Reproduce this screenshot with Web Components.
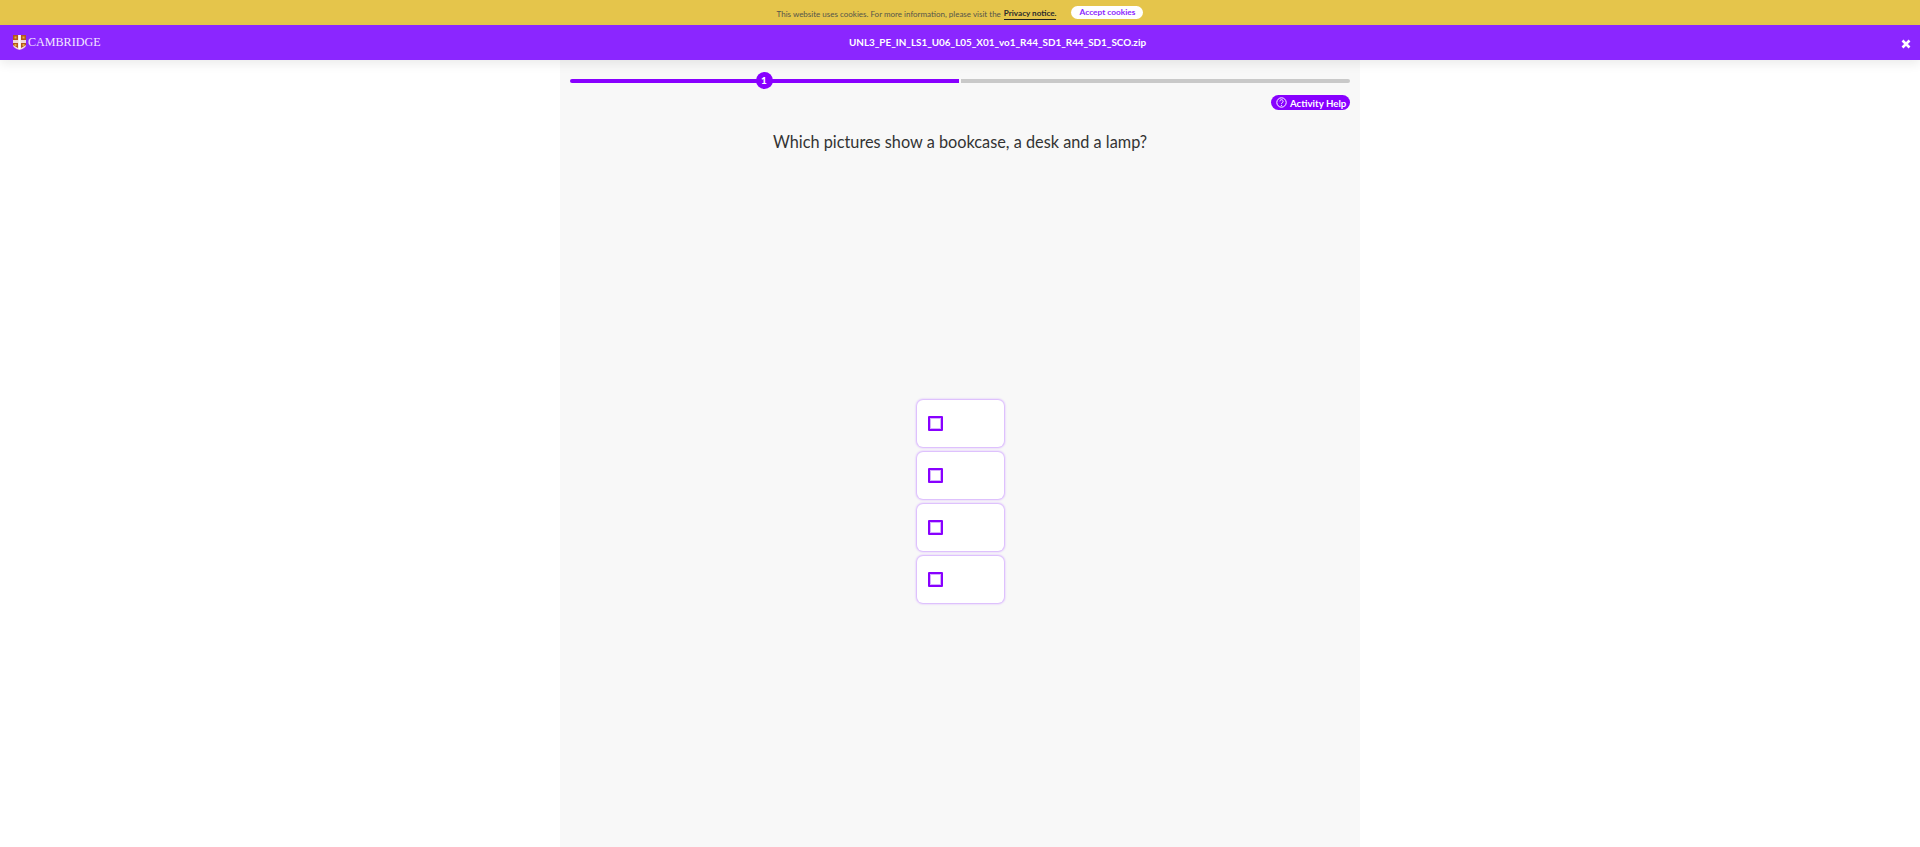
<!DOCTYPE html>
<html lang="en"><head><meta charset="utf-8"><title>Activity</title>
<style>
html,body{margin:0;padding:0;height:847px;overflow:hidden;background:#fff;font-family:Lato,"Noto Sans",sans-serif;}
body{display:flex;flex-direction:column;}
</style></head><body>
<cookie-bar></cookie-bar>
<top-bar></top-bar>
<activity-panel>
  <progress-track slot="progress"></progress-track>
  <help-pill slot="help"></help-pill>
  <span slot="question">Which pictures show a bookcase, a desk and a lamp?</span>
  <option-card></option-card><option-card></option-card><option-card></option-card><option-card></option-card>
</activity-panel>
<script>
function def(name,html){customElements.define(name,class extends HTMLElement{constructor(){super();this.attachShadow({mode:'open'}).innerHTML=html;}});}
def('cookie-bar',`<style>
:host{display:flex;flex:none;height:25px;background:#e5c54b;align-items:center;justify-content:center;font-size:8px;color:#55554a;box-sizing:border-box}
a{color:#2a2a2a;font-weight:700;font-size:8.1px;text-decoration:none;border-bottom:1px solid #222;margin-left:3px;line-height:11px;margin-top:3px}
button{all:unset;margin-left:15px;width:72px;height:13px;line-height:13px;border-radius:7px;background:#fff;color:#8b26ff;font-weight:700;font-size:8.3px;text-align:center;margin-top:-1px}
span{white-space:nowrap;margin-top:2px}
</style><span>This website uses cookies. For more information, please visit the</span><a>Privacy notice.</a><button>Accept cookies</button>`);
def('top-bar',`<style>
:host{display:grid;grid-template-columns:1fr auto 1fr;flex:none;height:35px;background:#8b26ff;color:#fff;align-items:center;box-shadow:0 4px 10px rgba(0,0,0,.08);position:relative;z-index:2}
.logo{display:flex;align-items:center;gap:2px;padding-left:13px;font:12.1px/1 "Liberation Serif",serif;color:#f3e8ff}
.title{font-size:9.9px;font-weight:700;margin:-2px 0 0 75px;white-space:nowrap}
.x{justify-self:end;margin:3px 9px 0 0;display:flex}
</style>
<div class="logo"><svg width="13" height="15" viewBox="0 0 13 15"><path d="M0 0H13V10Q13 13 6.500 15Q0 13 0 10Z" fill="#f0d8d8"/><path d="M0 0H5V5H0ZM8 0H13V5H8ZM0 8H5V13L0 10ZM8 8H13V10L8 13Z" fill="#b3561f"/><rect x="1.500" y="1.500" width="2" height="2" fill="#e3b23c"/><rect x="9.500" y="1.500" width="2" height="2" fill="#e3b23c"/><rect x="1.500" y="9" width="2" height="2" fill="#e3b23c"/><rect x="9.500" y="9" width="2" height="2" fill="#e3b23c"/><rect x="5.500" y="0" width="2" height="14" fill="#fff"/></svg><span>CAMBRIDGE</span></div>
<div class="title">UNL3_PE_IN_LS1_U06_L05_X01_vo1_R44_SD1_R44_SD1_SCO.zip</div>
<div class="x"><svg width="10" height="10" viewBox="0 0 10 10"><path d="M1.500 1.500L8.500 8.500M8.500 1.500L1.500 8.500" stroke="#fff" stroke-width="2.600"/></svg></div>`);
def('activity-panel',`<style>
:host{display:flex;flex-direction:column;align-self:center;flex:1;width:800px;box-sizing:border-box;background:#f8f8f8;padding:0 10px;min-height:0;overflow:hidden}
.help{display:flex;justify-content:flex-end;margin-top:6px}
.q{text-align:center;font-size:16.3px;line-height:24px;color:#333;margin-top:20px;height:24px}
.opts{display:flex;flex-direction:column;align-items:center;gap:5px;margin-top:246px}
</style><slot name="progress"></slot><div class="help"><slot name="help"></slot></div><div class="q"><slot name="question"></slot></div><div class="opts"><slot></slot></div>`);
def('progress-track',`<style>
:host{display:flex;align-items:center;height:17px;margin-top:12px;gap:2px;position:relative}
.a{width:389px;height:4px;background:#8800ff;border-radius:2px 0 0 2px}
.b{flex:1;height:4px;background:#c9c9c9;border-radius:0 2px 2px 0}
.n{position:absolute;left:185.500px;top:0;width:17px;height:17px;border-radius:50%;background:#8800ff;color:#fff;font-size:10px;font-weight:900;line-height:17px;text-align:center}
</style><div class="a"></div><div class="b"></div><div class="n">1</div>`);
def('help-pill',`<style>
:host{display:flex;align-items:center;gap:3px;width:79px;height:15px;box-sizing:border-box;padding-left:5px;border-radius:8px;background:#8800ff;color:#fff;font-size:9.7px;font-weight:700;white-space:nowrap}
svg{flex:none}
</style><svg width="11" height="11" viewBox="0 0 11 11"><circle cx="5.500" cy="5.500" r="4.700" fill="none" stroke="#fff" stroke-width="1"/><path d="M3.900 4.300A1.600 1.600 0 1 1 6.300 5.700Q5.500 6.100 5.500 6.900" fill="none" stroke="#fff" stroke-width="1"/><circle cx="5.500" cy="8.300" r=".6" fill="#fff"/></svg><span>Activity Help</span>`);
def('option-card',`<style>
:host{display:flex;align-items:center;width:87px;height:47px;box-sizing:border-box;padding-left:11px;background:#fff;border-radius:6px;box-shadow:0 0 2px 1px #d5aeff}
i{display:block;width:15px;height:15px;box-sizing:border-box;border:2.500px solid #8800ff;background:#fff;border-radius:1px;box-shadow:inset 0 0 0 1px #d5aeff}
</style><i></i>`);
</script>
</body></html>
